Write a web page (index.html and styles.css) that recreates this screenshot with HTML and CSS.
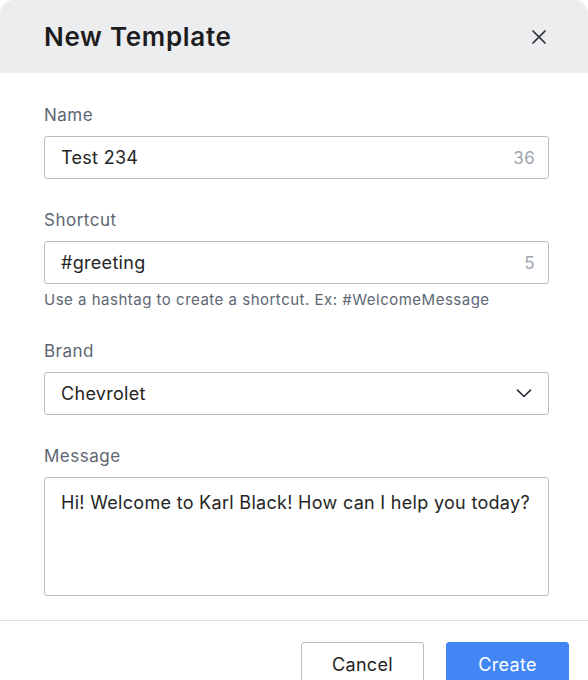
FILE: index.html
```html
<!DOCTYPE html>
<html lang="en">
<head>
<meta charset="utf-8">
<title>New Template</title>
<link rel="stylesheet" href="styles.css">
</head>
<body>
<div class="modal">
  <header class="modal-header">
    <h1 class="modal-title">New Template</h1>
    <button class="close-btn" aria-label="Close">
      <svg width="16" height="16" viewBox="0 0 16 16"><path d="M2 2 L14 14 M14 2 L2 14" stroke="#2b2f38" stroke-width="1.7" stroke-linecap="round" fill="none"/></svg>
    </button>
  </header>
  <div class="modal-body">
    <div class="field">
      <div class="label">Name</div>
      <div class="input"><span class="value">Test 234</span><span class="count">36</span></div>
    </div>
    <div class="field">
      <div class="label">Shortcut</div>
      <div class="input"><span class="value">#greeting</span><span class="count">5</span></div>
      <div class="help">Use a hashtag to create a shortcut. Ex: #WelcomeMessage</div>
    </div>
    <div class="field">
      <div class="label">Brand</div>
      <div class="input select"><span class="value">Chevrolet</span>
        <svg class="chevron" width="16" height="9" viewBox="0 0 16 9"><path d="M1.5 1.2 L8 7.5 L14.5 1.2" stroke="#2b2f38" stroke-width="1.7" stroke-linecap="round" stroke-linejoin="round" fill="none"/></svg>
      </div>
    </div>
    <div class="field">
      <div class="label">Message</div>
      <div class="textarea">Hi! Welcome to Karl Black! How can I help you today?</div>
    </div>
  </div>
  <footer class="modal-footer">
    <button class="btn btn-secondary">Cancel</button>
    <button class="btn btn-primary">Create</button>
  </footer>
</div>
</body>
</html>
```
FILE: styles.css
```css
* { box-sizing: border-box; }
html, body { margin: 0; padding: 0; background: #ffffff; }
body {
  font-family: Inter, "Liberation Sans", sans-serif;
  color: #262626;
  width: 588px;
  height: 680px;
  overflow: hidden;
}
.modal {
  width: 588px;
  background: #ffffff;
  border-radius: 14px 14px 0 0;
  overflow: hidden;
}
.modal-header {
  height: 73px;
  background: #ecedef;
  display: flex;
  align-items: center;
  justify-content: space-between;
  padding: 0 41px 0 44px;
}
.modal-title {
  margin: 0;
  font-size: 26px;
  font-weight: 600;
  color: #1d1d1f;
  letter-spacing: 0.7px;
}
.close-btn {
  border: 0;
  background: transparent;
  padding: 0;
  width: 16px;
  height: 16px;
  display: flex;
}
.modal-body {
  padding: 31px 39px 24px 44px;
  display: flex;
  flex-direction: column;
  gap: 30px;
}
.field { display: flex; flex-direction: column; }
.label {
  font-size: 17px;
  line-height: 22px;
  letter-spacing: 0.5px;
  color: #5d6674;
  margin-bottom: 10px;
}
.input {
  height: 43px;
  border: 1px solid #b9bdc3;
  border-radius: 3px;
  display: flex;
  align-items: center;
  justify-content: space-between;
  padding: 0 13px 0 16px;
  font-size: 18px;
  letter-spacing: 0.3px;
  color: #252525;
}
.count { color: #a0a5ab; font-size: 17px; }
.select { padding-right: 16px; }
.help {
  margin-top: 6px;
  font-size: 15px;
  line-height: 20px;
  letter-spacing: 0.5px;
  color: #5d6674;
}
.textarea {
  height: 119px;
  border: 1px solid #b9bdc3;
  border-radius: 3px;
  padding: 13px 16px;
  font-size: 18px;
  line-height: 24px;
  letter-spacing: 0.3px;
  color: #252525;
}
.modal-footer {
  border-top: 1px solid #dcdfe3;
  padding: 21px 19px 0 0;
  display: flex;
  justify-content: flex-end;
  gap: 22px;
}
.btn {
  width: 123px;
  height: 44px;
  border-radius: 3px;
  font-family: inherit;
  font-size: 18px;
  letter-spacing: 0.3px;
  padding: 0;
}
.btn-secondary {
  background: #ffffff;
  border: 1px solid #b9bdc3;
  color: #1f1f1f;
}
.btn-primary {
  background: #4286f5;
  border: 1px solid #4286f5;
  color: #ffffff;
}
```
